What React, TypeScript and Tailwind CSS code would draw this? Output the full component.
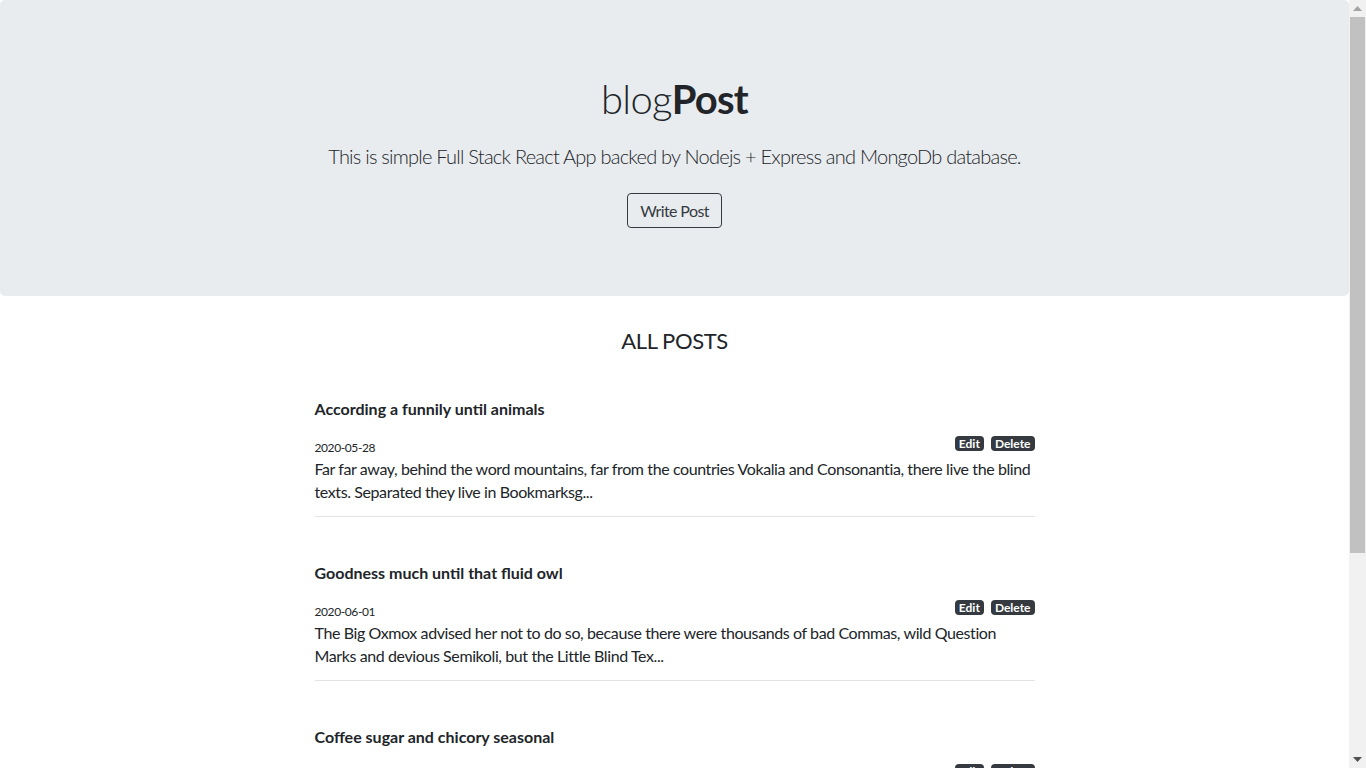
import React from 'react';

interface Post {
  id: number;
  title: string;
  date: string;
  body: string;
}

const POSTS: Post[] = [
  {
    id: 1,
    title: 'According a funnily until animals',
    date: '2020-05-28',
    body: 'Far far away, behind the word mountains, far from the countries Vokalia and Consonantia, there live the blind texts. Separated they live in Bookmarksg...',
  },
  {
    id: 2,
    title: 'Goodness much until that fluid owl',
    date: '2020-06-01',
    body: 'The Big Oxmox advised her not to do so, because there were thousands of bad Commas, wild Question Marks and devious Semikoli, but the Little Blind Tex...',
  },
  {
    id: 3,
    title: 'Coffee sugar and chicory seasonal',
    date: '2020-06-03',
    body: 'A small river named Duden flows by their place and supplies it with the necessary regelialia. It is a paradisematic country, in which roasted parts...',
  },
  {
    id: 4,
    title: 'Even the all-powerful Pointing',
    date: '2020-06-05',
    body: 'Even the all-powerful Pointing has no control about the blind texts it is an almost unorthographic life One day however a small line of blind text...',
  },
];

const PostItem: React.FC<{ post: Post }> = ({ post }) => (
  <div className="pt-[44px] first:pt-0">
    <h5 className="text-[16px] leading-[24px] font-bold text-[#212529]">{post.title}</h5>
    <div className="mt-[15px] flex items-end justify-between">
      <span className="text-[12px] leading-[18px] tracking-[-0.4px] text-[#212529]">{post.date}</span>
      <div className="flex gap-[7px] mb-[6px]">
        <span className="bg-[#343a40] text-white text-[12px] leading-[15px] font-bold px-[4px] rounded-[4px]">Edit</span>
        <span className="bg-[#343a40] text-white text-[12px] leading-[15px] font-bold px-[4px] rounded-[4px]">Delete</span>
      </div>
    </div>
    <p className="text-[16px] leading-[23px] tracking-[-0.4px] text-[#212529]">{post.body}</p>
    <hr className="mt-[13px] border-t border-[#e2e2e2]" />
  </div>
);

// static look-alike of the page's vertical scrollbar
const ScrollBar: React.FC = () => (
  <div className="w-[17px] shrink-0 bg-[#f1f1f1] flex flex-col items-center">
    <div className="h-[17px] flex items-center justify-center">
      <svg width="9" height="5" viewBox="0 0 9 5">
        <polygon points="4.5,0 9,5 0,5" fill="#a3a3a3" />
      </svg>
    </div>
    <div className="w-[15px] h-[536px] bg-[#c1c1c1]" />
    <div className="flex-1" />
    <div className="h-[17px] flex items-center justify-center">
      <svg width="9" height="5" viewBox="0 0 9 5">
        <polygon points="0,0 9,0 4.5,5" fill="#505050" />
      </svg>
    </div>
  </div>
);

export default function App() {
  return (
    <div className="h-screen flex bg-white font-['Lato','Liberation_Sans',sans-serif] text-[#212529]">
      <main className="flex-1 overflow-hidden">
        <div className="bg-[#e9ecef] rounded-[5px] h-[296px] flex flex-col items-center pt-[75px]">
          <h1 className="text-[40px] leading-[48px] font-light tracking-[-0.75px]">
            blog<span className="font-bold">Post</span>
          </h1>
          <p className="mt-[18px] text-[20px] leading-[30px] font-light tracking-[-0.76px]">
            This is simple Full Stack React App backed by Nodejs + Express and MongoDb database.
          </p>
          <button className="mt-[22px] h-[35px] px-3 border border-[#343a40] rounded-[4px] text-[16px] tracking-[-0.6px] text-[#343a40]">
            Write Post
          </button>
        </div>

        <h3 className="mt-[31px] text-center text-[22px] leading-[27px] tracking-[-0.4px]">ALL POSTS</h3>

        <div className="w-[720px] mx-auto mt-[43px]">
          {POSTS.map((p) => (
            <PostItem key={p.id} post={p} />
          ))}
        </div>
      </main>
      <ScrollBar />
    </div>
  );
}
